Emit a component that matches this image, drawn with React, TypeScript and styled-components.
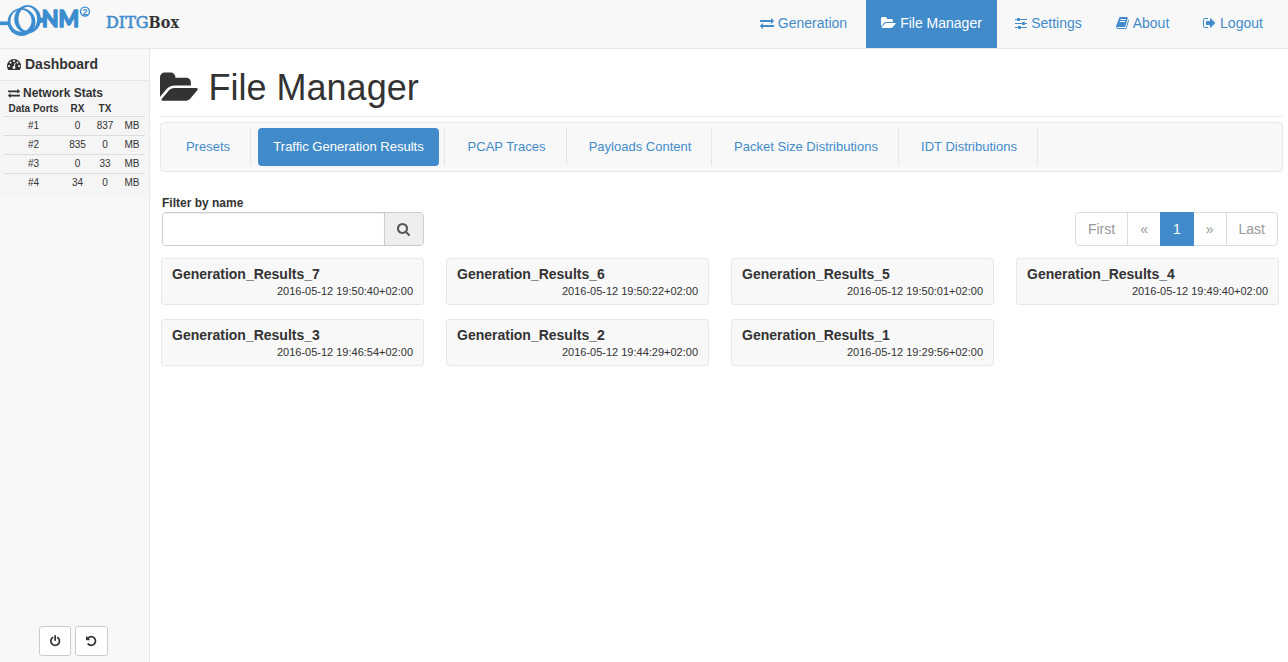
import React from 'react';
import styled, { createGlobalStyle, css } from 'styled-components';

const blue = '#428bca';
const logoBlue = '#3c8dcf';

const Global = createGlobalStyle`
  *, *::before, *::after { box-sizing: border-box; }
  html, body, #root { height: 100%; }
  body {
    margin: 0;
    overflow: hidden;
    background: #fff;
    color: #333;
    font: 14px/20px "Liberation Sans", Arial, sans-serif;
  }
  a { color: ${blue}; text-decoration: none; }
`;

/* [min-x, width, path] on a 1792-unit em */
const glyphs = {
  exchange: [0, 1792, 'M1792 1184v192q0 13-9.5 22.5t-22.5 9.5h-1376v192q0 13-9.5 22.5t-22.5 9.5q-12 0-24-10l-319-320q-9-9-9-22 0-14 9-23l320-320q9-9 23-9 13 0 22.5 9.5t9.5 22.5v192h1376q13 0 22.5 9.5t9.5 22.5zm0-544q0 14-9 23l-320 320q-9 9-23 9-13 0-22.5-9.5t-9.5-22.5v-192h-1376q-13 0-22.5-9.5t-9.5-22.5v-192q0-13 9.5-22.5t22.5-9.5h1376v-192q0-14 9-23t23-9q12 0 24 10l319 319q9 9 9 23z'],
  folder: [-64, 1920, 'M1815 952q0 31-31 66l-336 396q-43 51-120.5 86.5t-143.5 35.5h-1088q-34 0-60.5-13t-26.5-43q0-31 31-66l336-396q43-51 120.5-86.5t143.5-35.5h1088q34 0 60.5 13t26.5 43zm-343-344v160h-832q-94 0-197 47.5t-164 119.5l-337 396-5 6q0-4-.5-12.5t-.5-12.5v-960q0-92 66-158t158-66h320q92 0 158 66t66 158v32h544q92 0 158 66t66 158z'],
  sliders: [0, 1536, 'M352 1408v128h-352v-128h352zm352-128q26 0 45 19t19 45v256q0 26-19 45t-45 19h-256q-26 0-45-19t-19-45v-256q0-26 19-45t45-19h256zm160-384v128h-864v-128h864zm-640-512v128h-224v-128h224zm1312 1024v128h-736v-128h736zm-960-1152q26 0 45 19t19 45v256q0 26-19 45t-45 19h-256q-26 0-45-19t-19-45v-256q0-26 19-45t45-19h256zm640 512q26 0 45 19t19 45v256q0 26-19 45t-45 19h-256q-26 0-45-19t-19-45v-256q0-26 19-45t45-19h256zm320 128v128h-224v-128h224zm0-512v128h-864v-128h864z'],
  book: [64, 1664, 'M1703 478q40 57 18 129l-275 906q-19 64-76.5 107.5t-122.5 43.5h-923q-77 0-148.5-53.5t-99.5-131.5q-24-67-2-127 0-4 3-27t4-37q1-8-3-21.5t-3-19.5q2-11 8-21t16.5-23.5 16.5-23.5q23-38 45-91.5t30-91.5q3-10 .5-30t-.5-28q3-11 17-28t17-23q21-36 42-92t25-90q1-9-2.5-32t.5-28q4-13 22-30.5t22-22.5q19-26 42.5-84.5t27.5-96.5q1-8-3-25.5t-2-26.5q2-8 9-18t18-23 17-21q8-12 16.5-30.5t15-35 16-36 19.5-32 26.5-23.5 36-11.5 47.5 5.5l-1 3q38-9 51-9h761q74 0 114 56t18 130l-274 906q-36 119-71.5 153.5t-128.5 34.5h-869q-27 0-38 15-11 16-1 43 24 70 144 70h923q29 0 56-15.5t35-41.5l300-987q7-22 5-57 38 15 59 43zm-1064 2q-4 13 2 22.5t20 9.5h608q13 0 25.5-9.5t16.5-22.5l21-64q4-13-2-22.5t-20-9.5h-608q-13 0-25.5 9.5t-16.5 22.5zm-83 256q-4 13 2 22.5t20 9.5h608q13 0 25.5-9.5t16.5-22.5l21-64q4-13-2-22.5t-20-9.5h-608q-13 0-25.5 9.5t-16.5 22.5z'],
  signOut: [64, 1664, 'M704 1440q0 4 1 20t.5 26.5-3 23.5-10 19.5-20.5 6.5h-320q-119 0-203.5-84.5t-84.5-203.5v-704q0-119 84.5-203.5t203.5-84.5h320q13 0 22.5 9.5t9.5 22.5q0 4 1 20t.5 26.5-3 23.5-10 19.5-20.5 6.5h-320q-66 0-113 47t-47 113v704q0 66 47 113t113 47h312l11.5 1 11.5 3 8 5.5 7 9 2 13.5zm928-544q0 26-19 45l-544 544q-19 19-45 19t-45-19-19-45v-288h-448q-26 0-45-19t-19-45v-384q0-26 19-45t45-19h448v-288q0-26 19-45t45-19 45 19l544 544q19 19 19 45z'],
  gauge: [0, 1792, 'M384 1152q0-53-37.5-90.5t-90.5-37.5-90.5 37.5-37.5 90.5 37.5 90.5 90.5 37.5 90.5-37.5 37.5-90.5zm192-448q0-53-37.5-90.5t-90.5-37.5-90.5 37.5-37.5 90.5 37.5 90.5 90.5 37.5 90.5-37.5 37.5-90.5zm428 481l101-382q6-26-7.5-48.5t-38.5-29.5-48 6.5-30 39.5l-101 382q-60 5-107 43.5t-63 98.5q-20 77 20 146t117 89 146-20 89-117q16-60-6-117t-72-91zm660-33q0-53-37.5-90.5t-90.5-37.5-90.5 37.5-37.5 90.5 37.5 90.5 90.5 37.5 90.5-37.5 37.5-90.5zm-640-640q0-53-37.5-90.5t-90.5-37.5-90.5 37.5-37.5 90.5 37.5 90.5 90.5 37.5 90.5-37.5 37.5-90.5zm448 192q0-53-37.5-90.5t-90.5-37.5-90.5 37.5-37.5 90.5 37.5 90.5 90.5 37.5 90.5-37.5 37.5-90.5zm320 448q0 261-141 483-19 29-54 29h-1402q-35 0-54-29-141-221-141-483 0-182 71-348t191-286 286-191 348-71 348 71 286 191 191 286 71 348z'],
  search: [64, 1664, 'M1216 832q0-185-131.5-316.5t-316.5-131.5-316.5 131.5-131.5 316.5 131.5 316.5 316.5 131.5 316.5-131.5 131.5-316.5zm512 832q0 52-38 90t-90 38q-54 0-90-38l-343-342q-179 124-399 124-143 0-273.5-55.5t-225-150-150-225-55.5-273.5 55.5-273.5 150-225 225-150 273.5-55.5 273.5 55.5 225 150 150 225 55.5 273.5q0 220-124 399l343 343q37 37 37 90z'],
  power: [128, 1536, 'M1664 896q0 156-61 298t-164 245-245 164-298 61-298-61-245-164-164-245-61-298q0-182 80.5-343t226.5-270q43-32 95.5-25t83.5 50q32 42 24.5 94.5t-49.5 84.5q-98 74-151.5 181t-53.5 228q0 104 40.5 198.5t109.5 163.5 163.5 109.5 198.5 40.5 198.5-40.5 163.5-109.5 109.5-163.5 40.5-198.5q0-121-53.5-228t-151.5-181q-42-32-49.5-84.5t24.5-94.5q31-43 84-50t95 25q146 109 226.5 270t80.5 343zm-640-768v640q0 52-38 90t-90 38-90-38-38-90v-640q0-52 38-90t90-38 90 38 38 90z'],
  undo: [128, 1536, 'M1664 896q0 156-61 298t-164 245-245 164-298 61q-172 0-327-72.5t-264-204.5q-7-10-6.5-22.5t8.5-20.5l137-138q10-9 25-9 16 2 23 12 73 95 179 147t225 52q104 0 198.5-40.5t163.5-109.5 109.5-163.5 40.5-198.5-40.5-198.5-109.5-163.5-163.5-109.5-198.5-40.5q-98 0-188 35.5t-160 101.5l137 138q31 30 14 69-17 40-59 40h-448q-26 0-45-19t-19-45v-448q0-42 40-59 39-17 69 14l130 129q107-101 244.5-156.5t284.5-55.5q156 0 298 61t245 164 164 245 61 298z'],
} as const;

const Svg = styled.svg`
  flex: none;
  fill: currentColor;
  overflow: visible;
`;

function Icon({ name, size = 14 }: { name: keyof typeof glyphs; size?: number }) {
  const [x, w, d] = glyphs[name];
  return (
    <Svg width={(w / 1792) * size} height={size} viewBox={`${x} 0 ${w} 1792`}>
      <path d={d} />
    </Svg>
  );
}

const Page = styled.div`
  display: flex;
  flex-direction: column;
  height: 662px;
`;

const TopBar = styled.header`
  display: flex;
  flex: none;
  height: 49px;
  background: #f8f8f8;
  border-bottom: 1px solid #e7e7e7;
`;

const Brand = styled.div`
  display: flex;
  flex: 1;
`;

const BrandName = styled.span`
  padding: 13px 0 0 15px;
  font: bold 16px/20px "DejaVu Serif Condensed", "DejaVu Serif", serif;
  font-stretch: condensed;
  color: #333;
`;

const BrandAccent = styled.span`
  color: ${blue};
  font-weight: normal;
  font-family: "DejaVu Serif", serif;
  font-stretch: normal;
  -webkit-text-stroke: 0.6px ${blue};
`;

const TopNav = styled.nav`
  display: flex;
  padding-right: 7px;
`;

const TopLink = styled.a<{ $active?: boolean; $w: number }>`
  display: flex;
  align-items: center;
  justify-content: center;
  gap: 4px;
  width: ${p => p.$w}px;
  height: 48px;
  padding-bottom: 2px;
  white-space: nowrap;
  ${p => p.$active && css`background: ${blue}; color: #fff;`}
`;

const Body = styled.div`
  display: flex;
  flex: 1;
  min-height: 0;
`;

const Sidebar = styled.aside`
  display: flex;
  flex-direction: column;
  width: 150px;
  background: #f8f8f8;
  border-right: 1px solid #e7e7e7;
`;

const SideTitle = styled.div`
  display: flex;
  align-items: center;
  gap: 4px;
  height: 32px;
  padding: 0 0 1px 7px;
  border-bottom: 1px solid #e7e7e7;
  font-weight: bold;
`;

const Stats = styled.section`
  flex: none;
  height: 115px;
  padding: 4px 4px 0 3px;
  background: #f5f5f5;
`;

const StatsTitle = styled.div`
  display: flex;
  align-items: center;
  gap: 3px;
  height: 16px;
  padding-left: 5px;
  font-size: 12px;
  font-weight: bold;
`;

const StatRow = styled.div<{ $head?: boolean }>`
  display: grid;
  grid-template-columns: 61px 27px 28px 26px;
  height: ${p => (p.$head ? 15 : 19)}px;
  line-height: ${p => (p.$head ? 15 : 17)}px;
  font-size: 10px;
  font-weight: ${p => (p.$head ? 'bold' : 'normal')};
  text-align: center;
  ${p => !p.$head && css`border-top: 1px solid #ddd;`}
`;

const Controls = styled.div`
  display: flex;
  gap: 4px;
  margin: auto 0 6px 39px;
`;

const ControlButton = styled.button<{ $w: number }>`
  display: flex;
  align-items: center;
  justify-content: center;
  width: ${p => p.$w}px;
  height: 30px;
  padding: 0;
  border: 1px solid #ccc;
  border-radius: 3px;
  background: #fff;
  color: #333;
`;

const Main = styled.main`
  flex: 1;
  min-width: 0;
  padding: 0 5px 0 10px;
`;

const Title = styled.h1`
  display: flex;
  align-items: center;
  gap: 10px;
  height: 68px;
  margin: 0 0 5px;
  padding-top: 10px;
  border-bottom: 1px solid #eee;
  font-size: 36px;
  font-weight: normal;
  line-height: 40px;
`;

const Tabs = styled.nav`
  display: flex;
  height: 50px;
  padding: 5px 0 5px 3px;
  border: 1px solid #e7e7e7;
  border-radius: 4px;
  background: #f8f8f8;
`;

const TabCell = styled.div<{ $w: number }>`
  display: flex;
  justify-content: center;
  width: ${p => p.$w}px;
  padding-left: 2px;
  border-right: 1px solid #e7e7e7;
`;

const Tab = styled.a<{ $active?: boolean }>`
  height: 38px;
  padding: 0 15px;
  border-radius: 4px;
  font-size: 13px;
  line-height: 37px;
  white-space: nowrap;
  ${p => p.$active && css`background: ${blue}; color: #fff;`}
`;

const Toolbar = styled.div`
  display: flex;
  justify-content: space-between;
  align-items: flex-end;
  margin: 21px 5px 12px 2px;
`;

const FilterLabel = styled.label`
  display: block;
  height: 19px;
  font-size: 12px;
  font-weight: bold;
`;

const FilterGroup = styled.div`
  display: flex;
  width: 262px;
  height: 34px;
  border: 1px solid #ccc;
  border-radius: 4px;
  overflow: hidden;
`;

const FilterInput = styled.input`
  flex: 1;
  min-width: 0;
  border: 0;
  outline: 0;
  padding: 6px 12px;
  box-shadow: inset 0 1px 1px rgba(0, 0, 0, 0.075);
`;

const FilterButton = styled.button`
  display: flex;
  align-items: center;
  justify-content: center;
  width: 39px;
  padding: 0 1px 0 0;
  border: 0;
  border-left: 1px solid #ccc;
  background: #eee;
  color: #555;
`;

const Pager = styled.div`
  display: flex;
  height: 34px;
`;

const PageLink = styled.a<{ $active?: boolean }>`
  padding: 6px 12px;
  margin-left: -1px;
  border: 1px solid #ddd;
  color: #999;
  &:first-child { margin-left: 0; border-radius: 4px 0 0 4px; }
  &:last-child { border-radius: 0 4px 4px 0; }
  ${p => p.$active && css`
    z-index: 1;
    background: ${blue};
    border-color: ${blue};
    color: #fff;
  `}
`;

const Results = styled.div`
  display: grid;
  grid-template-columns: repeat(4, 263px);
  gap: 14px 22px;
  padding-left: 1px;
`;

const Card = styled.article`
  height: 47px;
  padding: 5px 10px;
  border: 1px solid #e7e7e7;
  border-radius: 3px;
  background: #f8f8f8;
`;

const CardName = styled.div`
  height: 19px;
  font-weight: bold;
`;

const CardDate = styled.div`
  font-size: 11px;
  line-height: 16px;
  text-align: right;
`;

function Logo() {
  return (
    <Svg width="91" height="40" viewBox="0 0 91 40">
      <path d="M0 23.3H9" stroke={logoBlue} strokeWidth="3.6" />
      <g fill={logoBlue} fillRule="evenodd">
        {/* back ring, heavier towards the bottom */}
        <path d="M21.5 8a14 14 0 1 0 .01 0zM21 9.8a10.6 11 0 1 1-.01 0z" />
        {/* front ring, heavier on both sides */}
        <path d="M27.6 5a13.4 14.2 0 1 0 .01 0zM27.8 6.8a9.4 12.2 0 1 1-.01 0z" />
      </g>
      <path d="M40 20.2H44" stroke={logoBlue} strokeWidth="5" />
      <text
        x="41.8"
        y="27"
        textLength="37.5"
        lengthAdjust="spacingAndGlyphs"
        fontFamily="Lato, sans-serif"
        fontWeight="900"
        fontSize="23"
        fill={logoBlue}
        stroke={logoBlue}
        strokeWidth="1.3"
        strokeLinejoin="round"
      >
        NM
      </text>
      <circle cx="85" cy="11.6" r="4.5" fill="none" stroke={logoBlue} strokeWidth="1.4" />
      <text x="85" y="14.7" textAnchor="middle" fontFamily="Liberation Sans, sans-serif" fontWeight="bold" fontSize="9" fill={logoBlue}>2</text>
    </Svg>
  );
}

const topLinks = [
  { icon: 'exchange', label: 'Generation', w: 125 },
  { icon: 'folder', label: 'File Manager', w: 131, active: true },
  { icon: 'sliders', label: 'Settings', w: 103 },
  { icon: 'book', label: 'About', w: 85 },
  { icon: 'signOut', label: 'Logout', w: 96 },
] as const;

const stats = [
  ['#1', '0', '837', 'MB'],
  ['#2', '835', '0', 'MB'],
  ['#3', '0', '33', 'MB'],
  ['#4', '34', '0', 'MB'],
];

const tabs = [
  { label: 'Presets', w: 87 },
  { label: 'Traffic Generation Results', w: 194, active: true },
  { label: 'PCAP Traces', w: 122 },
  { label: 'Payloads Content', w: 145 },
  { label: 'Packet Size Distributions', w: 187 },
  { label: 'IDT Distributions', w: 139 },
];

const results = [
  ['Generation_Results_7', '2016-05-12 19:50:40+02:00'],
  ['Generation_Results_6', '2016-05-12 19:50:22+02:00'],
  ['Generation_Results_5', '2016-05-12 19:50:01+02:00'],
  ['Generation_Results_4', '2016-05-12 19:49:40+02:00'],
  ['Generation_Results_3', '2016-05-12 19:46:54+02:00'],
  ['Generation_Results_2', '2016-05-12 19:44:29+02:00'],
  ['Generation_Results_1', '2016-05-12 19:29:56+02:00'],
];

export default function App() {
  return (
    <Page>
      <Global />
      <TopBar>
        <Brand>
          <Logo />
          <BrandName><BrandAccent>DITG</BrandAccent>Box</BrandName>
        </Brand>
        <TopNav>
          {topLinks.map(l => (
            <TopLink key={l.label} href="#" $w={l.w} $active={'active' in l}>
              <Icon name={l.icon} />{l.label}
            </TopLink>
          ))}
        </TopNav>
      </TopBar>
      <Body>
        <Sidebar>
          <SideTitle><Icon name="gauge" />Dashboard</SideTitle>
          <Stats>
            <StatsTitle><Icon name="exchange" size={12} />Network Stats</StatsTitle>
            <StatRow $head><span>Data Ports</span><span>RX</span><span>TX</span></StatRow>
            {stats.map(r => (
              <StatRow key={r[0]}>{r.map((c, i) => <span key={i}>{c}</span>)}</StatRow>
            ))}
          </Stats>
          <Controls>
            <ControlButton $w={32} aria-label="Power off"><Icon name="power" size={12} /></ControlButton>
            <ControlButton $w={33} aria-label="Restart"><Icon name="undo" size={12} /></ControlButton>
          </Controls>
        </Sidebar>
        <Main>
          <Title><Icon name="folder" size={36} />File Manager</Title>
          <Tabs>
            {tabs.map(t => (
              <TabCell key={t.label} $w={t.w}><Tab href="#" $active={t.active}>{t.label}</Tab></TabCell>
            ))}
          </Tabs>
          <Toolbar>
            <div>
              <FilterLabel htmlFor="filter">Filter by name</FilterLabel>
              <FilterGroup>
                <FilterInput id="filter" />
                <FilterButton aria-label="Search"><Icon name="search" /></FilterButton>
              </FilterGroup>
            </div>
            <Pager>
              <PageLink>First</PageLink>
              <PageLink>«</PageLink>
              <PageLink $active>1</PageLink>
              <PageLink>»</PageLink>
              <PageLink>Last</PageLink>
            </Pager>
          </Toolbar>
          <Results>
            {results.map(([name, date]) => (
              <Card key={name}><CardName>{name}</CardName><CardDate>{date}</CardDate></Card>
            ))}
          </Results>
        </Main>
      </Body>
    </Page>
  );
}
